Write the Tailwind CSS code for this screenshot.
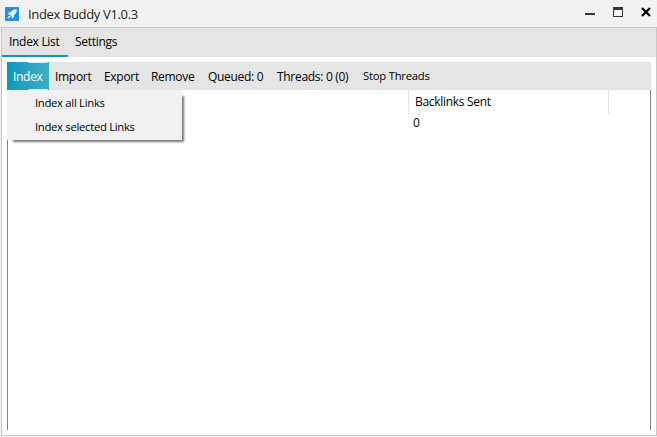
<!DOCTYPE html>
<html lang="en">
<head>
<meta charset="utf-8">
<title>Index Buddy</title>
<script src="https://cdn.jsdelivr.net/npm/@tailwindcss/browser@4"></script>
</head>
<body class="w-[657px] h-[437px] overflow-hidden bg-[#f2f2f2] font-['Open_Sans','Noto_Sans',sans-serif] text-[12px] tracking-[-0.3px] leading-4 text-black whitespace-nowrap">
<div class="flex h-full flex-col">
  <header class="flex h-[27px] shrink-0 items-center pl-[5px]">
    <svg class="h-[14px] w-[14px]" viewBox="0 0 14 14"><path fill="#2490e6" d="M0 0h14v14H0z"/><path fill="#fff" d="M11.7 2.2C8.8 2.2 7.3 3.3 6 5.1L4.2 5.3 2.7 7.3l2 .1 2 2 .1 2 2-1.5.2-1.9c1.8-1.3 2.9-2.8 2.7-5.8z"/><path stroke="#fff" stroke-width="1.2" d="M5 8.8 2.8 11"/><circle cx="9" cy="4.9" r=".5" fill="#2490e6"/></svg>
    <h1 class="ml-[9px] text-[13px] tracking-[-0.35px] text-[#1c1c1c]">Index Buddy V1.0.3</h1>
    <svg class="ml-auto h-[27px] w-[87px]" viewBox="0 0 87 27" shape-rendering="crispEdges"><path fill="#333338" d="M15 13h10v2H15zM43 7h10v10H43z"/><path fill="#f8f6fa" d="M44 10h8v6h-8z"/><path shape-rendering="auto" stroke="#000" stroke-width="2.2" d="m72 8 8 8m0-8-8 8"/></svg>
  </header>
  <main class="ml-px flex h-[409px] w-[656px] flex-col border border-[#c8c8c8] bg-white">
    <nav class="flex h-[29px] shrink-0 bg-[#e5e5e5]">
      <div class="h-[29px] w-[66px] border-b-2 border-[#0a98b7] pl-[7px] pt-[6px]">Index List</div>
      <div class="pl-[7px] pt-[6px]">Settings</div>
    </nav>
    <section class="relative mx-[5px] mt-[5px] flex h-[368px] flex-col">
      <div class="flex h-[28px] shrink-0 bg-[#e5e5e5] pr-2">
        <div class="relative w-[42px] overflow-hidden bg-linear-to-r from-[#0999b9] to-[#3cafca] pl-[6px] pt-[7px] text-white"><i class="absolute -top-[2px] left-[21px] h-[3px] w-[20px] rounded-full bg-white/75"></i><i class="absolute -bottom-[2px] left-[21px] h-[3px] w-[20px] rounded-full bg-white/75"></i>Index</div>
        <div class="w-[49px] pl-[6px] pt-[7px]">Import</div>
        <div class="w-[47px] pl-[6px] pt-[7px]">Export</div>
        <div class="w-[57px] pl-[6px] pt-[7px]">Remove</div>
        <div class="w-[69px] pl-[6px] pt-[7px]">Queued: 0</div>
        <div class="w-[86px] pl-[6px] pt-[7px]">Threads: 0 (0)</div>
        <div class="pl-[6px] pt-[6px] text-[11.25px] tracking-[-0.22px]">Stop Threads</div>
      </div>
      <div class="grow border-x border-[#838389]">
        <div class="flex h-6"><div class="w-[401px] border-r border-[#e3e3e3]"></div><div class="w-[200px] border-r border-[#e3e3e3] pl-[6px] pt-[4px]">Backlinks Sent</div></div>
        <div class="pl-[405px] pt-px">0</div>
      </div>
      <div class="absolute left-0 top-[28px] h-[50px] w-[175px] bg-[#f1f1f1] pl-[28px] pt-[5px] text-[11.25px] tracking-[-0.28px] shadow-[4px_4px_2px_-2px_#777]">
        <div class="h-6">Index all Links</div><div class="h-6">Index selected Links</div>
      </div>
    </section>
  </main>
</div>
</body>
</html>
